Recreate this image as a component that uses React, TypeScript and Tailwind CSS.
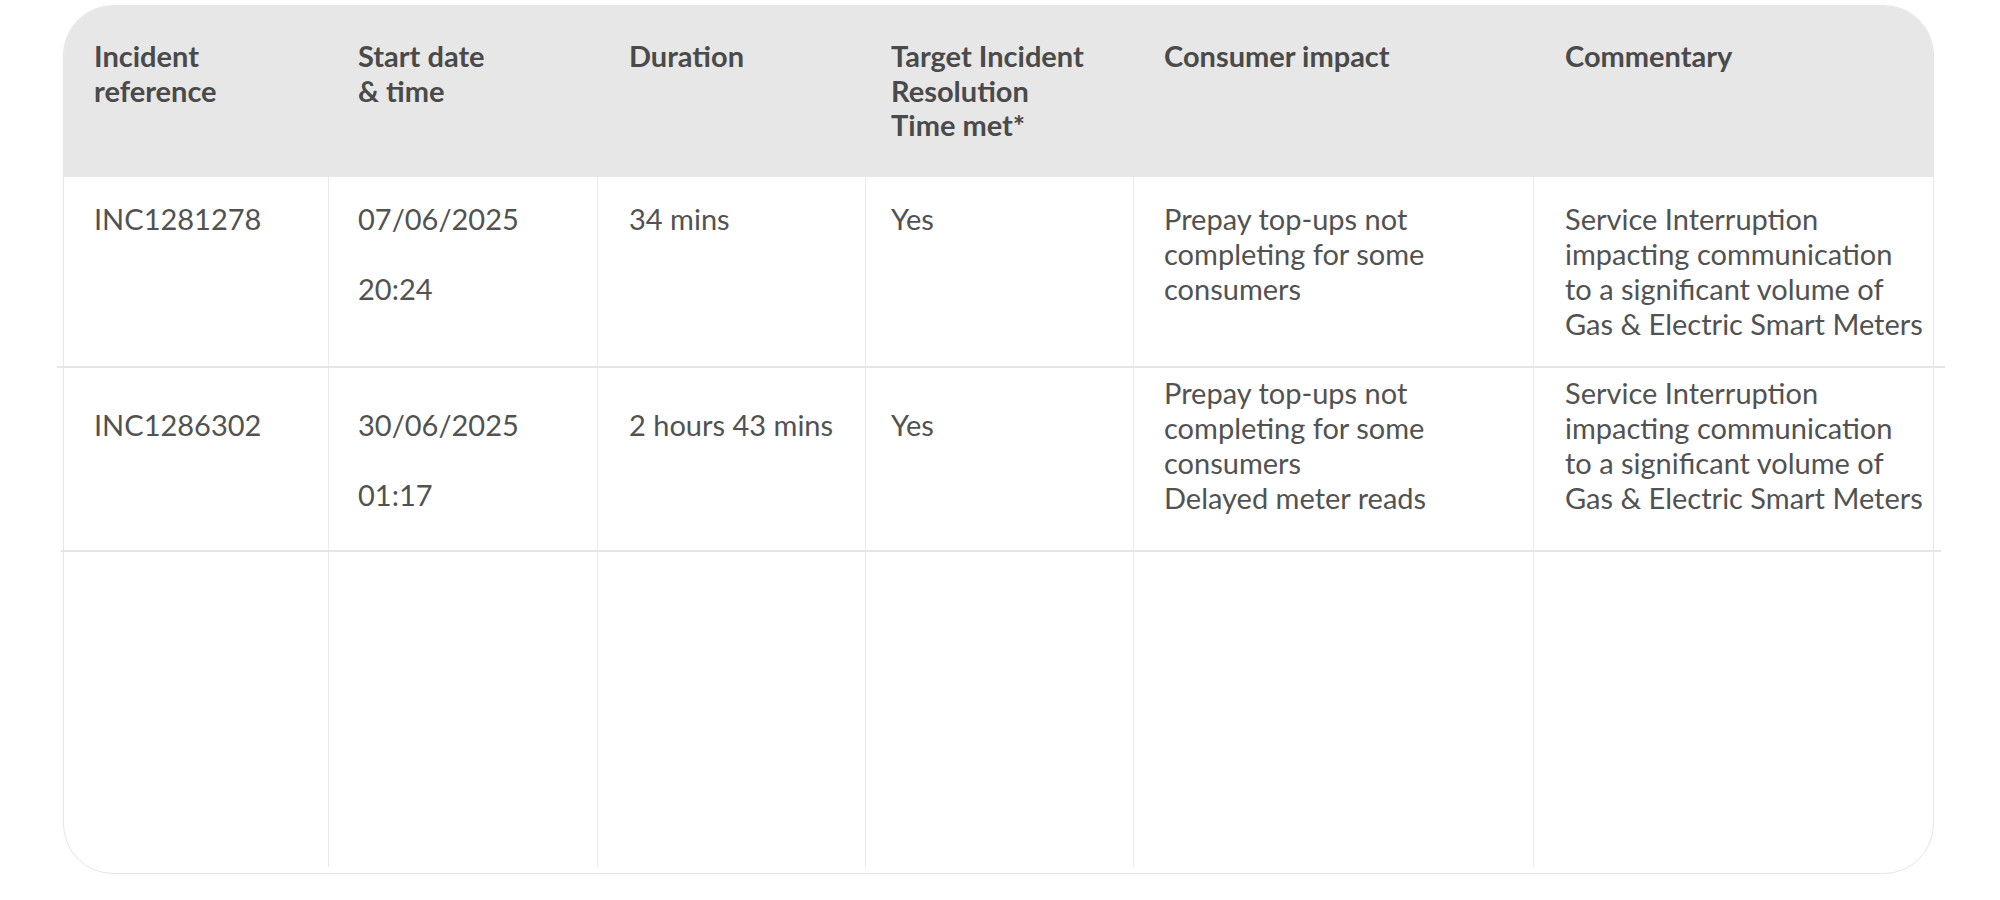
import React from 'react';

interface Incident {
  ref: string;
  date: string;
  time: string;
  duration: string;
  met: string;
  impact: string[];
  commentary: string[];
}

const commentary = [
  'Service Interruption',
  'impacting communication',
  'to a significant volume of',
  'Gas & Electric Smart Meters',
];

const incidents: Incident[] = [
  {
    ref: 'INC1281278',
    date: '07/06/2025',
    time: '20:24',
    duration: '34 mins',
    met: 'Yes',
    impact: ['Prepay top-ups not completing for some consumers'],
    commentary,
  },
  {
    ref: 'INC1286302',
    date: '30/06/2025',
    time: '01:17',
    duration: '2 hours 43 mins',
    met: 'Yes',
    impact: ['Prepay top-ups not completing for some consumers', 'Delayed meter reads'],
    commentary,
  },
];

const cols = 'grid grid-cols-[265px_269px_268px_268px_400px_399px]';
const line = 'border-r border-[#ebebeb]';

const App: React.FC = () => {
  return (
    <div className="min-h-[900px] bg-white pl-[63px] pt-[5px] font-[Lato,'Liberation_Sans',sans-serif] text-[29px] leading-[35px]">
      <div className="flex h-[869px] w-[1871px] flex-col rounded-[50px] border border-[#e6e6e6] pb-[6px]">
        {/* header */}
        <div className={`${cols} h-[171px] shrink-0 rounded-t-[49px] bg-[#e7e7e7] font-bold text-[#4a4a4a] leading-[34.5px]`}>
          <div className="pl-[30px] pt-[33px]">Incident<br />reference</div>
          <div className="pl-[29px] pt-[33px]">Start date<br />&amp; time</div>
          <div className="pl-[31px] pt-[33px]">Duration</div>
          <div className="pl-[25px] pt-[33px]">Target Incident<br />Resolution<br />Time met*</div>
          <div className="pl-[30px] pt-[33px]">Consumer impact</div>
          <div className="pl-[31px] pt-[33px]">Commentary</div>
        </div>

        {incidents.map((inc, i) => {
          const first = i === 0;
          const pt = first ? 'pt-[24px]' : 'pt-[39px]';
          const ptList = first ? 'pt-[24px]' : 'pt-[7px]';
          return (
            <React.Fragment key={inc.ref}>
              <div className={`${cols} ${first ? 'h-[189px]' : 'h-[182px]'} shrink-0 text-[#525252]`}>
                <div className={`${line} pl-[30px] ${pt}`}>{inc.ref}</div>
                <div className={`${line} pl-[29px] ${pt}`}>
                  <p>{inc.date}</p>
                  <p className="mt-[35px]">{inc.time}</p>
                </div>
                <div className={`${line} pl-[31px] ${pt}`}>{inc.duration}</div>
                <div className={`${line} pl-[25px] ${pt}`}>{inc.met}</div>
                <div className={`${line} pl-[30px] pr-[20px] ${ptList}`}>
                  {inc.impact.map((t) => (
                    <p key={t}>{t}</p>
                  ))}
                </div>
                <div className={`pl-[31px] ${ptList}`}>
                  {inc.commentary.map((t) => (
                    <p key={t} className="whitespace-nowrap">{t}</p>
                  ))}
                </div>
              </div>
              <div className={`h-[2px] shrink-0 bg-[#e6e6e6] ${first ? '-ml-[7px] w-[1888px]' : '-ml-[3px] w-[1880px]'}`} />
            </React.Fragment>
          );
        })}

        {/* empty filler row */}
        <div className={`${cols} flex-1`}>
          <div className={line} />
          <div className={line} />
          <div className={line} />
          <div className={line} />
          <div className={line} />
          <div />
        </div>
      </div>
    </div>
  );
};

export default App;
